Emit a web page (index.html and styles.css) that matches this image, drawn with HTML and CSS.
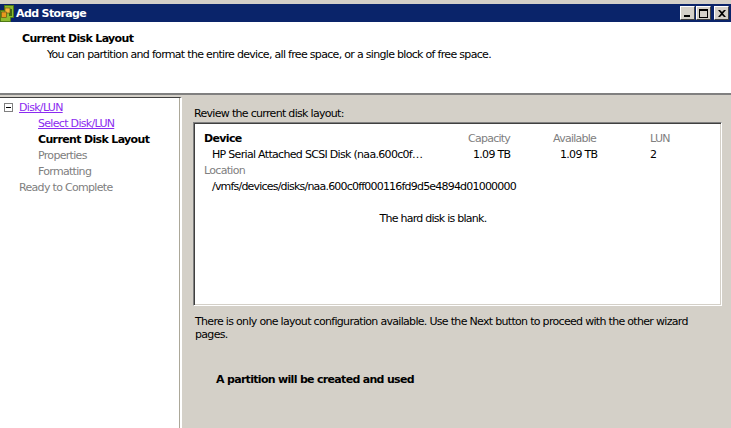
FILE: index.html
```html
<!DOCTYPE html>
<html lang="en">
<head>
<meta charset="utf-8">
<title>Add Storage</title>
<link rel="stylesheet" href="styles.css">
</head>
<body>
<div class="window">
  <header class="titlebar">
    <svg class="app-icon" width="16" height="18" viewBox="0 0 16 18"><path d="M4.500 1.500h9v12h-3v4h-10v-11h4z" fill="#8dbb2f" stroke="#4f7a14"/><path d="M7 5h5v7h-3v-3h-2z" fill="#3f6a12"/><rect x="5" y="4" width="5" height="5" fill="#f4b63a" stroke="#5a4a10" stroke-width="0.6"/><rect x="1.500" y="8" width="5" height="5.500" fill="#e8981e" stroke="#5a4a10" stroke-width="0.6"/></svg>
    <span class="title">Add Storage</span>
    <div class="win-buttons">
      <span class="win-btn"><i class="g-min"></i></span>
      <span class="win-btn"><i class="g-max"></i></span>
      <span class="win-btn"><svg width="8" height="7" viewBox="0 0 8 7"><path d="M0 0h2l2 2 2-2h2L5 3.500 8 7H6L4 5 2 7H0l3-3.500z" fill="#000"/></svg></span>
    </div>
  </header>
  <section class="intro">
    <h1 class="intro-title">Current Disk Layout</h1>
    <p class="intro-text">You can partition and format the entire device, all free space, or a single block of free space.</p>
  </section>
  <div class="body">
    <nav class="nav">
      <div class="nav-row top"><span class="tree-box"></span><a class="link">Disk/LUN</a></div>
      <div class="nav-row sub"><a class="link">Select Disk/LUN</a></div>
      <div class="nav-row sub current">Current Disk Layout</div>
      <div class="nav-row sub muted">Properties</div>
      <div class="nav-row sub muted">Formatting</div>
      <div class="nav-row top2 muted">Ready to Complete</div>
    </nav>
    <main class="main">
      <p class="review">Review the current disk layout:</p>
      <div class="panel">
        <div class="grid">
          <div class="device">Device</div><div class="muted cap">Capacity</div><div class="muted avail">Available</div><div class="muted lun">LUN</div>
          <div class="dev-name">HP Serial Attached SCSI Disk (naa.600c0f…</div><div class="val1">1.09 TB</div><div class="val2">1.09 TB</div><div class="lun">2</div>
        </div>
        <div class="muted">Location</div>
        <div class="loc">/vmfs/devices/disks/naa.600c0ff000116fd9d5e4894d01000000</div>
        <div class="blank">The hard disk is blank.</div>
      </div>
      <p class="note">There is only one layout configuration available. Use the Next button to proceed with the other wizard pages.</p>
      <p class="result">A partition will be created and used</p>
    </main>
  </div>
</div>
</body>
</html>
```
FILE: styles.css
```css
* { box-sizing: border-box; }
html, body { margin: 0; padding: 0; }
body { width: 731px; height: 428px; overflow: hidden; background: #fff; font: 11px/16px "DejaVu Sans", sans-serif; letter-spacing: -0.69px; color: #000; }
.window { display: flex; flex-direction: column; height: 428px; border-top: 4px solid #d4d0c8; }
.titlebar { height: 18px; background: #0a246a; display: flex; align-items: center; color: #fff; }
.app-icon { flex: none; }
.title { font-weight: bold; letter-spacing: -0.62px; padding-top: 1px; }
.win-buttons { margin-left: auto; display: flex; margin-right: 2px; }
.win-btn { width: 15px; height: 14px; background: #d4d0c8; border: 1px solid; border-color: #fff #404040 #404040 #fff; display: flex; align-items: center; justify-content: center; }
.win-btn + .win-btn { margin-left: 1px; }
.win-btn:last-child { margin-left: 3px; }
.g-min { width: 6px; height: 2px; background: #000; margin-top: 6px; margin-right: 2px; }
.g-max { width: 9px; height: 9px; border: 1px solid #000; border-top-width: 2px; }
.intro { height: 73px; border-bottom: 2px solid #808080; padding: 9px 0 0 22px; background: #fff; }
.intro-title { margin: 0; font-size: 11px; font-weight: bold; line-height: 16px; letter-spacing: -0.65px; }
.intro-text { margin: 0 0 0 25px; }
.body { flex: 1; display: flex; min-height: 0; background: #d4d0c8; }
.nav { width: 182px; flex: none; margin-top: 2px; background: #fff; border-right: 2px solid #fff; border-top: 1px solid #404040; padding-top: 2px; box-shadow: inset -1px 0 0 #aca899; }
.nav-row { height: 16px; white-space: nowrap; }
.top, .top2 { padding-left: 19px; position: relative; }
.sub { padding-left: 38px; }
.link { color: #8b2bf0; text-decoration: underline; }
.current { font-weight: bold; letter-spacing: -0.65px; }
.muted { color: #808080; }
.tree-box { position: absolute; left: 4px; top: 3px; width: 9px; height: 9px; border: 1px solid #808080; background: linear-gradient(#000, #000) center / 5px 1px no-repeat #fff; }
.main { flex: 1; padding-left: 11px; min-width: 0; }
.review { margin: 11px 0 0 1px; }
.panel { width: 529px; height: 184px; background: #fff; border: 1px solid; border-color: #808080 #fff #fff #808080; box-shadow: inset 1px 1px 0 #404040, inset -1px -1px 0 #d4d0c8; padding: 8px 0 0 10px; }
.grid { display: grid; grid-template-columns: 254px 88px 98px 70px; }
.device { font-weight: bold; letter-spacing: -0.65px; }
.cap { padding-left: 10px; letter-spacing: -0.75px; }
.avail { padding-left: 7px; letter-spacing: -0.75px; }
.lun { padding-left: 6px; }
.dev-name { padding-left: 8px; white-space: nowrap; }
.val1 { padding-left: 15px; }
.val2 { padding-left: 14px; }
.loc { padding-left: 8px; letter-spacing: -0.8px; }
.blank { width: 458px; text-align: center; margin-top: 16px; letter-spacing: -0.75px; }
.note { margin: 9px 30px 0 2px; line-height: 13px; }
.result { margin: 31px 0 0 23px; font-weight: bold; }
```
